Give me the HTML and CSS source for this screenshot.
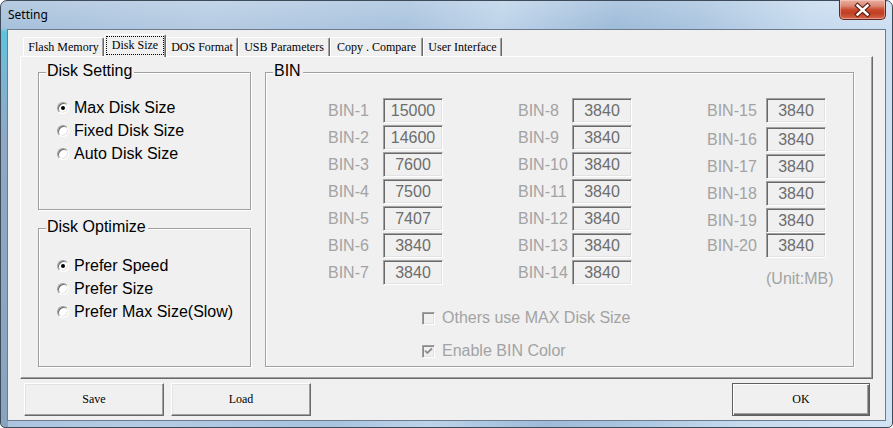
FILE: index.html
```html
<!DOCTYPE html>
<html>
<head>
<meta charset="utf-8">
<title>Setting</title>
<link rel="stylesheet" href="styles.css">
</head>
<body>
<div class="window">
  <div class="titlebar">
    <span class="title">Setting</span>
    <div class="close">
      <svg width="45" height="18" viewBox="0 0 45 18">
        <path d="M17.5 4.5 L27.5 13.5 M27.5 4.5 L17.5 13.5" stroke="#5a1f14" stroke-width="4.6" stroke-linecap="square" fill="none"/>
        <path d="M17.5 4.5 L27.5 13.5 M27.5 4.5 L17.5 13.5" stroke="#ffffff" stroke-width="2.4" stroke-linecap="square" fill="none"/>
      </svg>
    </div>
  </div>
  <div class="client">
    <div class="tabs">
      <div class="tab w-flash">Flash Memory</div>
      <div class="tab sel w-disk"><span class="focus">Disk Size</span></div>
      <div class="tab w-dos">DOS Format</div>
      <div class="tab w-usb">USB Parameters</div>
      <div class="tab w-copy">Copy . Compare</div>
      <div class="tab w-ui">User Interface</div>
    </div>
    <div class="panel">
      <div class="leftcol">
        <div class="group g-setting">
          <div class="gtitle">Disk Setting</div>
          <div class="opts o-setting">
            <div class="opt"><span class="radio on"></span>Max Disk Size</div>
            <div class="opt"><span class="radio"></span>Fixed Disk Size</div>
            <div class="opt"><span class="radio"></span>Auto Disk Size</div>
          </div>
        </div>
        <div class="group g-opt">
          <div class="gtitle">Disk Optimize</div>
          <div class="opts o-opt">
            <div class="opt"><span class="radio on"></span>Prefer Speed</div>
            <div class="opt"><span class="radio"></span>Prefer Size</div>
            <div class="opt"><span class="radio"></span>Prefer Max Size(Slow)</div>
          </div>
        </div>
      </div>
      <div class="group g-bin">
        <div class="gtitle">BIN</div>
        <div class="bingrid">
          <div class="bincol c1">
            <div class="bl">BIN-1</div><div class="bx">15000</div>
            <div class="bl">BIN-2</div><div class="bx">14600</div>
            <div class="bl">BIN-3</div><div class="bx">7600</div>
            <div class="bl">BIN-4</div><div class="bx">7500</div>
            <div class="bl">BIN-5</div><div class="bx">7407</div>
            <div class="bl">BIN-6</div><div class="bx">3840</div>
            <div class="bl">BIN-7</div><div class="bx">3840</div>
          </div>
          <div class="bincol c2">
            <div class="bl">BIN-8</div><div class="bx">3840</div>
            <div class="bl">BIN-9</div><div class="bx">3840</div>
            <div class="bl">BIN-10</div><div class="bx">3840</div>
            <div class="bl">BIN-11</div><div class="bx">3840</div>
            <div class="bl">BIN-12</div><div class="bx">3840</div>
            <div class="bl">BIN-13</div><div class="bx">3840</div>
            <div class="bl">BIN-14</div><div class="bx">3840</div>
          </div>
          <div class="bincol c3">
            <div class="bl">BIN-15</div><div class="bx">3840</div>
            <div class="bl dn">BIN-16</div><div class="bx dn">3840</div>
            <div class="bl">BIN-17</div><div class="bx">3840</div>
            <div class="bl">BIN-18</div><div class="bx">3840</div>
            <div class="bl">BIN-19</div><div class="bx">3840</div>
            <div class="bl up">BIN-20</div><div class="bx up">3840</div>
            <div class="unit">(Unit:MB)</div>
          </div>
        </div>
        <div class="checks">
          <div class="chk"><span class="cb"></span>Others use MAX Disk Size</div>
          <div class="chk"><span class="cb"><svg width="11" height="11" viewBox="0 0 11 11"><path d="M2 4.5 L4.3 7 L9 2.5" stroke="#8c8c8c" stroke-width="1.8" fill="none"/></svg></span>Enable BIN Color</div>
        </div>
      </div>
    </div>
    <div class="buttons">
      <div class="btn">Save</div>
      <div class="btn">Load</div>
      <div class="btn default">OK</div>
    </div>
  </div>
</div>
</body>
</html>
```
FILE: styles.css
```css
html, body {
  margin: 0;
  padding: 0;
}
body {
  width: 893px;
  height: 428px;
  overflow: hidden;
  background: #ffffff;
}
.window {
  box-sizing: border-box;
  width: 893px;
  height: 428px;
  border: 1px solid #3e4b5a;
  border-radius: 7px 7px 5px 5px;
  padding: 0 6px 6px 6px;
  display: flex;
  flex-direction: column;
  background:
    linear-gradient(to bottom, transparent 27px, #5ac5da 31px, #78b6d6 70px, #8ea9c5 140px, #8aa4c0 100%) left top / 7px 100% no-repeat,
    linear-gradient(to bottom, rgba(255,255,255,0.18), rgba(255,255,255,0) 28px),
    linear-gradient(100deg, #a6c0db 0%, #b5cbe3 22%, #a9c3de 42%, #bdd3e9 52%, #9ebbd9 64%, #a9c4df 72%, #c6daee 84%, #d2e3f4 100%);
}
.titlebar {
  height: 28px;
  display: flex;
  align-items: flex-start;
}
.title {
  margin: 6px 0 0 1px;
  font-family: "Noto Sans", "Liberation Sans", sans-serif;
  font-size: 12px;
  line-height: 16px;
  color: #000;
}
.close {
  margin-left: auto;
  box-sizing: border-box;
  width: 47px;
  height: 20px;
  margin-top: -1px;
  border: 1px solid #5b2a22;
  border-top: none;
  border-radius: 0 0 5px 5px;
  background: linear-gradient(to bottom, #eab0a2 0%, #dc8a76 30%, #c8482c 52%, #c13f23 70%, #d8664a 100%);
  box-shadow: inset 0 0 0 1px rgba(255, 220, 210, 0.45);
  display: flex;
  align-items: center;
  justify-content: center;
}
.close svg {
  display: block;
}
.client {
  flex: 1;
  border: 1px solid #6c7b8e;
  background: #f0f0f0;
  display: flex;
  flex-direction: column;
}

/* tabs */
.tabs {
  display: flex;
  align-items: flex-end;
  height: 26px;
  padding-left: 15px;
  box-sizing: border-box;
}
.tab {
  box-sizing: border-box;
  height: 19px;
  border-top: 1px solid #ffffff;
  border-left: 1px solid #ffffff;
  border-right: 1px solid #696969;
  box-shadow: inset -1px 0 0 #a0a0a0;
  border-radius: 2px 2px 0 0;
  font-family: "Liberation Serif", "Times New Roman", serif;
  font-size: 12px;
  color: #000;
  display: flex;
  align-items: center;
  justify-content: center;
  white-space: nowrap;
  background: #f0f0f0;
}
.tab.sel {
  height: 23px;
  margin-bottom: -1px;
  position: relative;
  z-index: 1;
  padding: 1px 1px 2px 1px;
}
.focus {
  flex: 1;
  align-self: stretch;
  border: 1px dotted #000;
  display: flex;
  align-items: center;
  justify-content: center;
  padding-bottom: 1px;
}
.w-flash { width: 81px; }
.w-disk  { width: 62px; }
.w-dos   { width: 72px; }
.w-usb   { width: 92px; }
.w-copy  { width: 93px; }
.w-ui    { width: 79px; }

/* panel */
.panel {
  box-sizing: border-box;
  margin: 0 12px;
  height: 323px;
  border: 1px solid;
  border-color: #ffffff #696969 #696969 #ffffff;
  box-shadow: inset -1px -1px 0 #a0a0a0;
  padding: 15px 0 0 17px;
  display: flex;
  gap: 14px;
}
.leftcol {
  width: 213px;
  display: flex;
  flex-direction: column;
  gap: 18px;
}
.group {
  box-sizing: border-box;
  border: 1px solid #a0a0a0;
  box-shadow: inset 1px 1px 0 #ffffff, 1px 1px 0 #ffffff;
  font-family: "Liberation Sans", Arial, sans-serif;
  font-size: 16px;
}
.g-setting { height: 138px; }
.g-opt { height: 139px; }
.g-bin {
  width: 589px;
  height: 295px;
  padding-left: 62px;
}
.gtitle {
  width: fit-content;
  margin: -11px 0 0 7px;
  padding: 0 2px 0 1px;
  background: #f0f0f0;
  line-height: 18px;
  color: #000;
}
.g-bin .gtitle {
  margin-left: -55px;
}
.opts {
  padding-left: 18px;
}
.o-setting { margin-top: 16px; }
.o-opt { margin-top: 18px; }
.opt {
  display: flex;
  align-items: center;
  height: 23px;
  line-height: 23px;
  color: #000;
  white-space: nowrap;
}
.radio {
  box-sizing: border-box;
  width: 12px;
  height: 12px;
  border-radius: 50%;
  border: 1px solid;
  border-color: #a0a0a0 #ffffff #ffffff #a0a0a0;
  box-shadow: inset 1px 1px 0 #696969, inset -1px -1px 0 #e3e3e3;
  background: #ffffff;
  margin-right: 5px;
  display: flex;
  align-items: center;
  justify-content: center;
}
.radio.on::after {
  content: "";
  width: 4px;
  height: 4px;
  border-radius: 50%;
  background: #000;
}

/* bin grid */
.bingrid {
  display: flex;
  gap: 75px;
  margin-top: 18px;
}
.bincol {
  display: grid;
  row-gap: 2px;
  align-content: start;
}
.c1 { grid-template-columns: 55px 60px; }
.c2 { grid-template-columns: 54px 60px; }
.c3 { grid-template-columns: 59px 60px; }
.bl {
  height: 25px;
  line-height: 25px;
  color: #a3a3a3;
  white-space: nowrap;
}
.bx {
  box-sizing: border-box;
  height: 25px;
  border: 1px solid;
  border-color: #a0a0a0 #ffffff #ffffff #a0a0a0;
  box-shadow: inset 1px 1px 0 #696969, inset -1px -1px 0 #e3e3e3;
  text-align: center;
  line-height: 23px;
  color: #6d6d6d;
}
.dn { margin-top: 2px; }
.up { margin-top: -2px; }
.unit {
  grid-column: 2;
  margin-top: 10px;
  line-height: 18px;
  color: #a3a3a3;
  white-space: nowrap;
}
.checks {
  display: flex;
  flex-direction: column;
  gap: 11px;
  margin: 19px 0 0 94px;
}
.chk {
  display: flex;
  align-items: center;
  height: 22px;
  color: #a3a3a3;
  white-space: nowrap;
}
.cb {
  box-sizing: border-box;
  width: 13px;
  height: 13px;
  border: 1px solid;
  border-color: #a0a0a0 #ffffff #ffffff #a0a0a0;
  box-shadow: inset 1px 1px 0 #8a8a8a, inset -1px -1px 0 #e3e3e3;
  background: #f0f0f0;
  margin-right: 7px;
  display: flex;
  align-items: center;
  justify-content: center;
}
.cb svg {
  display: block;
}

/* buttons */
.buttons {
  display: flex;
  gap: 7px;
  padding: 4px 15px 0 16px;
}
.btn {
  box-sizing: border-box;
  width: 140px;
  height: 33px;
  border: 1px solid;
  border-color: #ffffff #696969 #696969 #ffffff;
  box-shadow: inset -1px -1px 0 #a0a0a0, inset 1px 1px 0 #e3e3e3;
  font-family: "Liberation Serif", "Times New Roman", serif;
  font-size: 12px;
  color: #000;
  display: flex;
  align-items: center;
  justify-content: center;
}
.btn.default {
  width: 138px;
  margin-left: auto;
  border-color: #5f5f5f;
  box-shadow: inset 1px 1px 0 #ffffff, inset -1px -1px 0 #696969, inset -2px -2px 0 #a0a0a0;
}
```
